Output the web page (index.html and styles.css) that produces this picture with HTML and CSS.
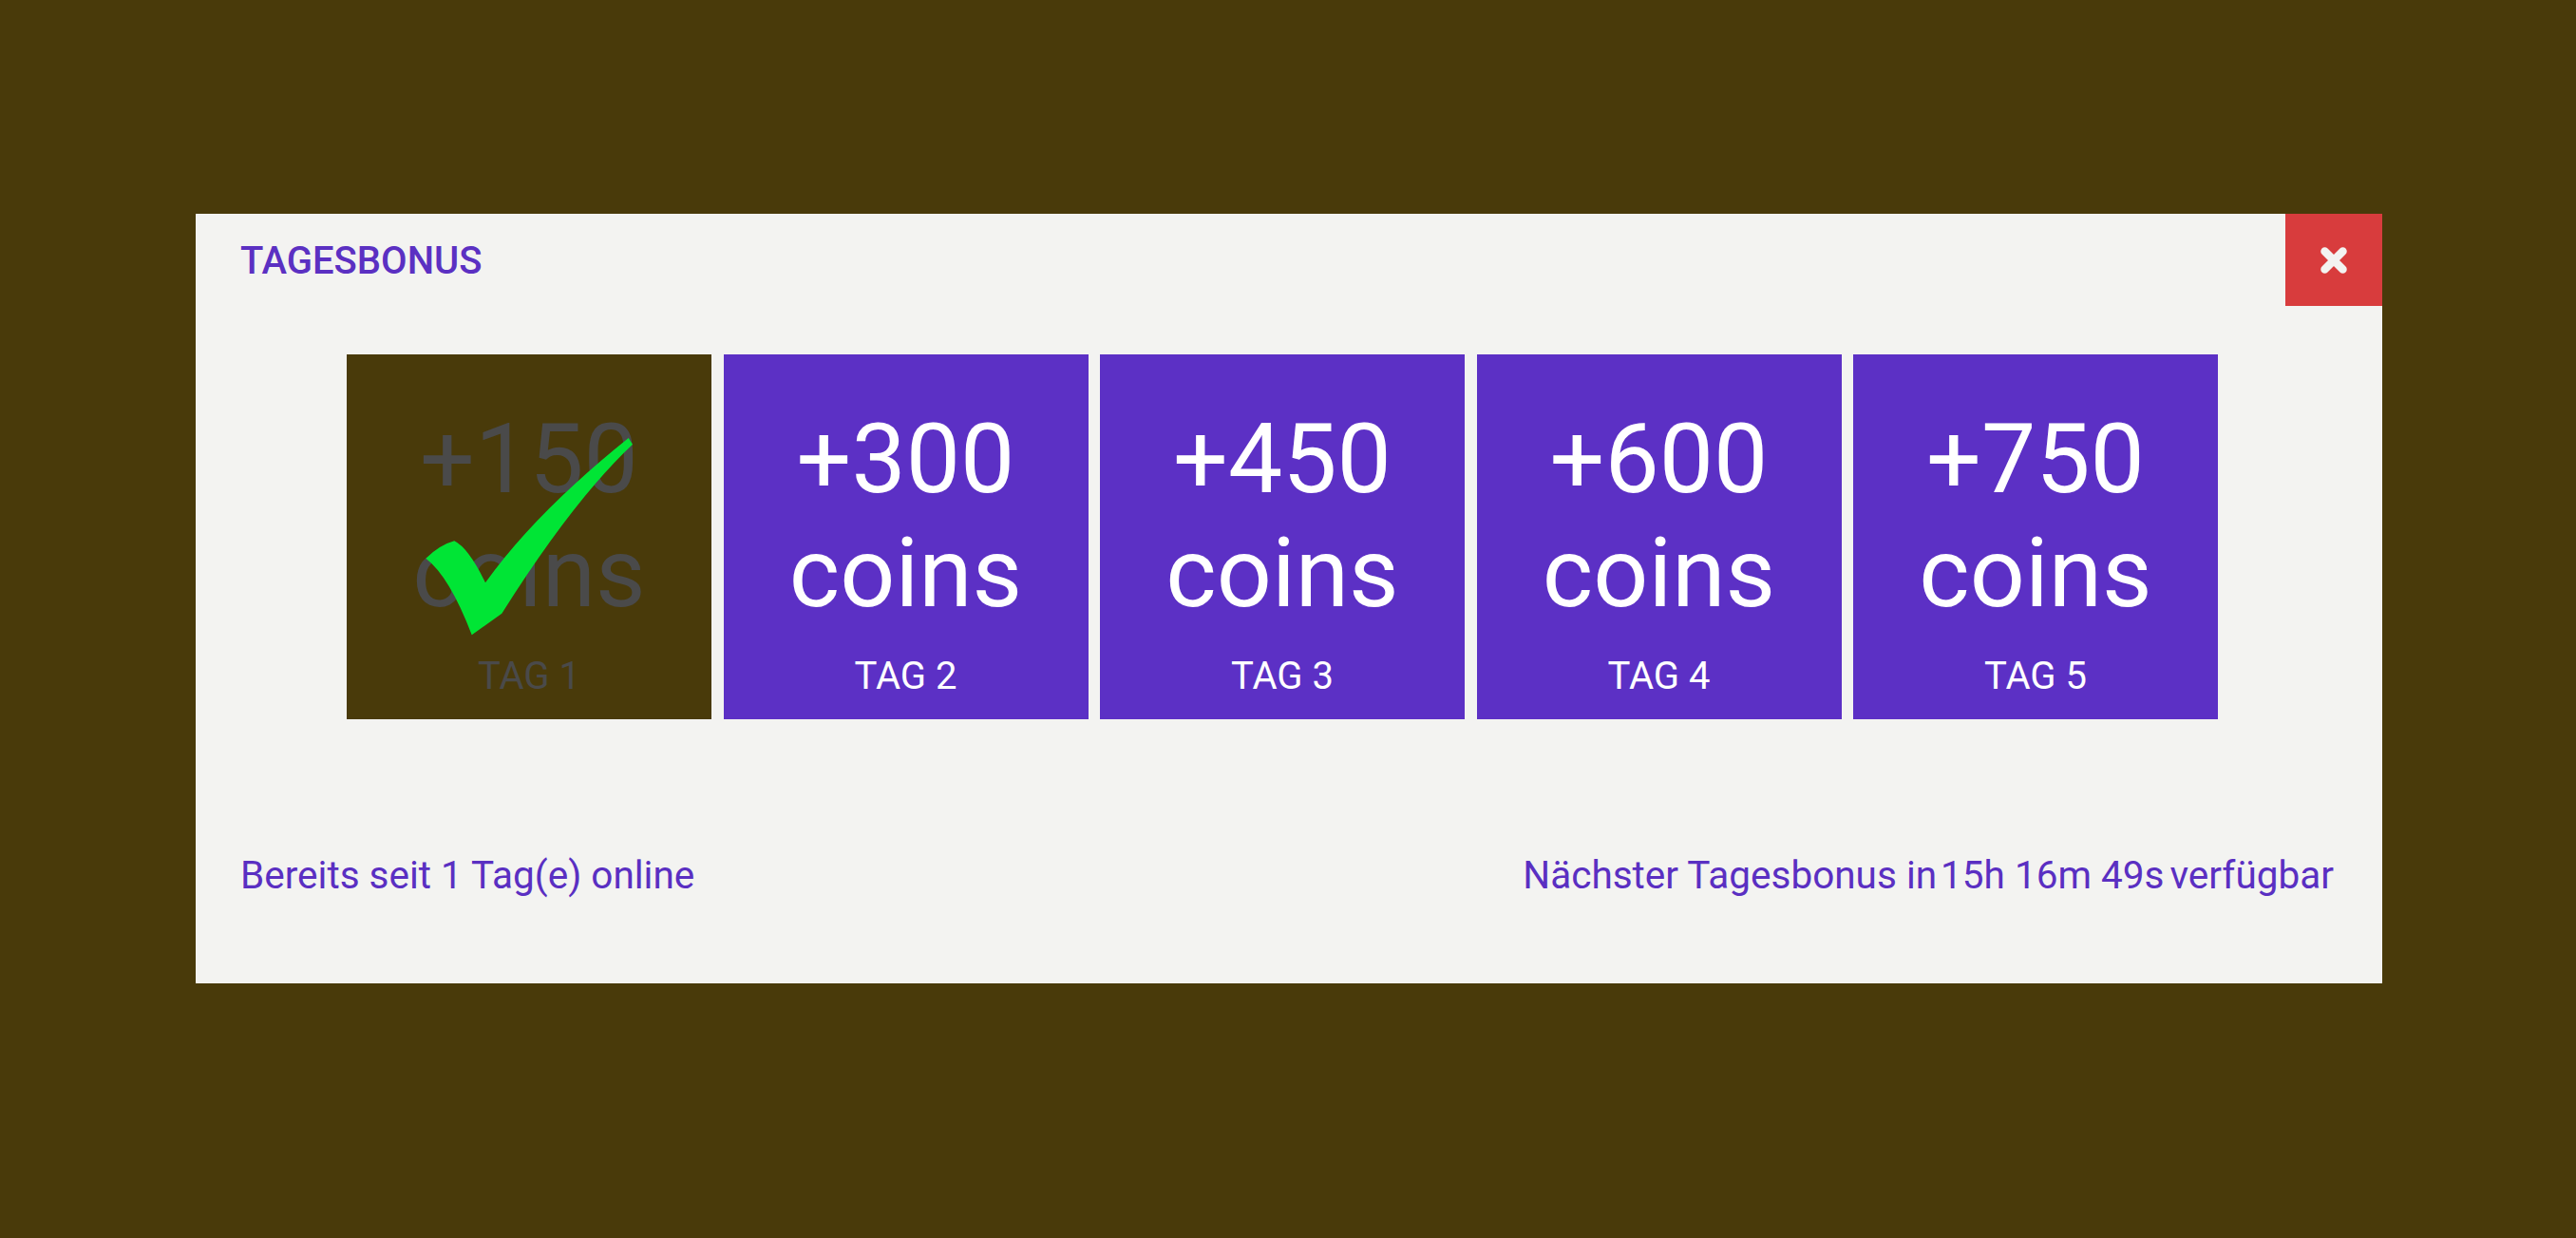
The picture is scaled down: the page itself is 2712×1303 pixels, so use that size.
FILE: index.html
```html
<!DOCTYPE html>
<html lang="de">
<head>
<meta charset="utf-8">
<title>Tagesbonus</title>
<link rel="stylesheet" href="styles.css">
</head>
<body>
<div class="modal">
  <div class="modal-header">
    <h2 class="title">TAGESBONUS</h2>
  </div>
  <button class="close" aria-label="Schließen">
    <svg width="28" height="28" viewBox="0 0 28 28"><path d="M4.5 4.5 L23.5 23.5 M23.5 4.5 L4.5 23.5" stroke="#f3f3f1" stroke-width="8.5" stroke-linecap="round" fill="none"/></svg>
  </button>
  <div class="cards">
    <div class="card done">
      <div class="amount">+150<br>coins</div>
      <div class="day">TAG 1</div>
      <svg class="check" width="384" height="384" viewBox="0 0 384 384">
        <path d="M83.3 214.7 Q98.3 200.3 113.3 196.3 Q128.3 203.7 146 240.3 Q198.3 167 296.7 88 L301 94.7 Q238.3 153.7 163.3 272.7 L131.7 295.3 Q108.3 233.7 83.3 214.7 Z" fill="#00e535"/>
      </svg>
    </div>
    <div class="card">
      <div class="amount">+300<br>coins</div>
      <div class="day">TAG 2</div>
    </div>
    <div class="card">
      <div class="amount">+450<br>coins</div>
      <div class="day">TAG 3</div>
    </div>
    <div class="card">
      <div class="amount">+600<br>coins</div>
      <div class="day">TAG 4</div>
    </div>
    <div class="card">
      <div class="amount">+750<br>coins</div>
      <div class="day">TAG 5</div>
    </div>
  </div>
  <div class="footer">
    <div class="online">Bereits seit 1 Tag(e) online</div>
    <div class="next">Nächster Tagesbonus in<span class="time">15h 16m 49s</span>verfügbar</div>
  </div>
</div>
</body>
</html>
```
FILE: styles.css
```css
html, body {
  margin: 0;
  padding: 0;
}
body {
  background: #493a0a;
  font-family: Roboto, "Liberation Sans", sans-serif;
  height: 1303px;
  overflow: hidden;
}
.modal {
  position: relative;
  margin: 225px 0 0 206px;
  width: 2302px;
  height: 810px;
  background: #f3f3f1;
  box-sizing: border-box;
}
.modal-header {
  padding: 26px 51px 0 47px;
}
.title {
  margin: 0;
  font-size: 40px;
  font-weight: 500;
  line-height: normal;
  color: #5b30c2;
}
.close {
  position: absolute;
  top: 0;
  right: 0;
  width: 102px;
  height: 97px;
  border: 0;
  padding: 0;
  margin: 0;
  background: #d83c3d;
  display: flex;
  align-items: center;
  justify-content: center;
  cursor: pointer;
}
.close svg {
  display: block;
}
.cards {
  display: flex;
  justify-content: center;
  gap: 12.5px;
  padding: 0 55px 0 41px;
  margin-top: 75px;
}
.card {
  position: relative;
  width: 384px;
  height: 384px;
  flex: none;
  background: #5c30c5;
  color: #ffffff;
  text-align: center;
  box-sizing: border-box;
  padding-top: 50px;
}
.amount {
  font-size: 102px;
  line-height: 120px;
}
.day {
  margin-top: 25px;
  font-size: 40px;
  line-height: 48px;
}
.card.done {
  background: #493a0a;
  color: #4a4a4a;
}
.check {
  position: absolute;
  left: 0;
  top: 0;
}
.footer {
  display: flex;
  justify-content: space-between;
  padding: 0 51px 0 47px;
  margin-top: 140px;
  font-size: 40.5px;
  line-height: normal;
  color: #5a2fc2;
}
.time {
  margin: 0 6px 0 4px;
}
```
